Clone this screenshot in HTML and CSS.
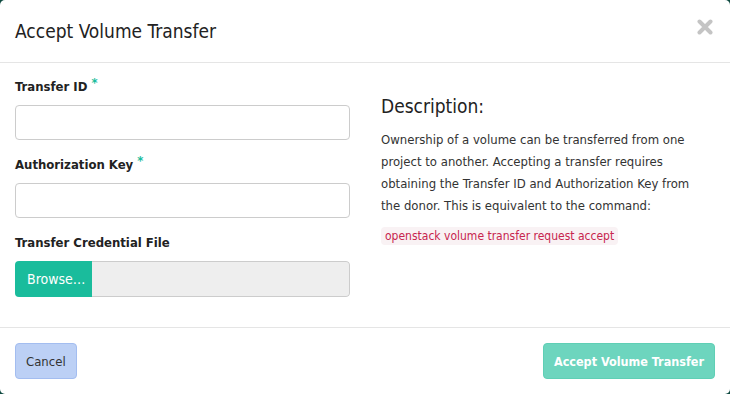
FILE: index.html
```html
<!DOCTYPE html>
<html>
<head>
    <title>Accept Volume Transfer</title>
    <link rel="stylesheet" href="styles.css">
</head>
<body>
    <div class="modal">
        <div class="modal-header">
            <h3>Accept Volume Transfer</h3>
            <svg class="close" width="16" height="16" viewBox="0 0 16 16">
                <path d="M2.5 2.5 L13.5 13.5 M13.5 2.5 L2.5 13.5" stroke="#c4c4c4" stroke-width="4" stroke-linecap="round"/>
            </svg>
        </div>
        <div class="modal-body">
            <div class="col">
                <div class="field">
                    <label>Transfer ID <span class="req">*</span></label>
                    <input type="text">
                </div>
                <div class="field">
                    <label>Authorization Key <span class="req">*</span></label>
                    <input type="text">
                </div>
                <div class="field">
                    <label>Transfer Credential File</label>
                    <div class="file-input">
                        <span class="browse">Browse&hellip;</span>
                        <span class="file-name"></span>
                    </div>
                </div>
            </div>
            <div class="col">
                <h3 class="desc-title">Description:</h3>
                <p>Ownership of a volume can be transferred from one project to another. Accepting a transfer requires obtaining the Transfer ID and Authorization Key from the donor. This is equivalent to the command:</p>
                <code>openstack volume transfer request accept</code>
            </div>
        </div>
        <div class="modal-footer">
            <button class="btn btn-cancel">Cancel</button>
            <button class="btn btn-primary">Accept Volume Transfer</button>
        </div>
    </div>
</body>
</html>
```

FILE: styles.css
```css
* {
    box-sizing: border-box;
}
html, body {
    margin: 0;
    height: 100%;
}
body {
    background: #0f4a40;
    font-family: 'DejaVu Sans Condensed', 'Liberation Sans', sans-serif;
    font-size: 13px;
    color: #333;
}
.modal {
    background: #fff;
    height: 394px;
    border-radius: 5px;
}
.modal-header {
    height: 63px;
    border-bottom: 1px solid #e5e5e5;
    display: flex;
    align-items: center;
    justify-content: space-between;
    padding: 0 17px 0 15px;
}
.modal-header h3 {
    margin: 0;
    font-size: 19px;
    font-weight: normal;
    color: #222;
}
.close {
    display: block;
    margin-top: -9px;
}
.modal-body {
    display: flex;
    height: 264px;
    padding-top: 14px;
}
.col {
    width: 365px;
    padding: 0 15px;
}
.col + .col {
    padding-left: 16px;
}
.field {
    margin-bottom: 15px;
}
label {
    display: block;
    height: 20px;
    font-weight: bold;
    font-size: 13px;
    line-height: 20px;
    color: #222;
    margin-bottom: 8px;
}
.req {
    color: #1abc9c;
    position: relative;
    top: -4px;
}
input {
    display: block;
    width: 100%;
    height: 35px;
    border: 1px solid #ccc;
    border-radius: 4px;
    font-family: inherit;
}
.file-input {
    display: flex;
    height: 36px;
    border-radius: 4px;
    overflow: hidden;
}
.browse {
    background: #1abc9c;
    color: #fff;
    padding: 0 12px;
    width: 77px;
    display: flex;
    align-items: center;
    font-size: 14px;
}
.file-name {
    flex: 1;
    background: #eee;
    border: 1px solid #ccc;
    border-left: none;
    border-radius: 0 4px 4px 0;
}
.desc-title {
    margin: 18px 0 12px;
    font-size: 19px;
    font-weight: normal;
    color: #222;
}
p {
    margin: 0 0 10px;
    line-height: 22px;
    max-width: 325px;
}
code {
    display: inline-block;
    font-family: inherit;
    font-size: 12px;
    color: #c7254e;
    background: #f9f2f4;
    padding: 2px 4px;
    border-radius: 4px;
}
.modal-footer {
    border-top: 1px solid #e5e5e5;
    display: flex;
    justify-content: space-between;
    padding: 15px 15px;
}
.btn {
    height: 36px;
    padding: 0 10px;
    border-radius: 4px;
    font-family: inherit;
    font-size: 13px;
    border: 1px solid transparent;
}
.btn-cancel {
    background: #bcd0f5;
    border-color: #a3bdf0;
    color: #333;
}
.btn-primary {
    background: #6dd5be;
    border-color: #5fcfb5;
    color: #fff;
    font-weight: bold;
    font-size: 12.5px;
}
```
